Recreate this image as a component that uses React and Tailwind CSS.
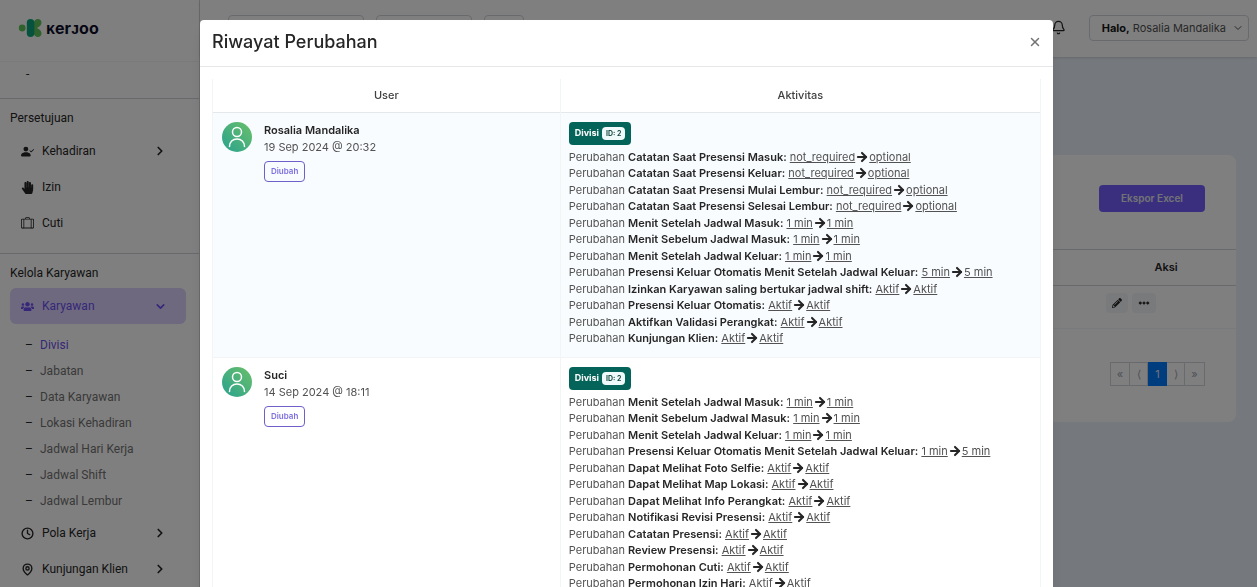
import { Bell, ChevronDown, ChevronRight, ArrowRight, X, Clock, MapPin } from "lucide-react";
import { BsFillPersonCheckFill, BsSuitcaseLg, BsThreeDots } from "react-icons/bs";
import { FaHandPaper, FaUsers, FaPencilAlt } from "react-icons/fa";

const navRowClass = "flex h-9 w-full items-center gap-2 pl-[11px] text-xs text-left";
const pageCellClass = "flex h-6 items-center justify-center border border-gray-300 text-[11px] text-gray-400";

const approvals = [
  { label: "Kehadiran", icon: BsFillPersonCheckFill, expandable: true },
  { label: "Izin", icon: FaHandPaper },
  { label: "Cuti", icon: BsSuitcaseLg },
];

const employeeLinks = ["Divisi", "Jabatan", "Data Karyawan", "Lokasi Kehadiran", "Jadwal Hari Kerja", "Jadwal Shift", "Jadwal Lembur"];

const history = [
  {
    user: "Rosalia Mandalika",
    date: "19 Sep 2024 @ 20:32",
    changes: [
      ["Catatan Saat Presensi Masuk", "not_required", "optional"],
      ["Catatan Saat Presensi Keluar", "not_required", "optional"],
      ["Catatan Saat Presensi Mulai Lembur", "not_required", "optional"],
      ["Catatan Saat Presensi Selesai Lembur", "not_required", "optional"],
      ["Menit Setelah Jadwal Masuk", "1 min", "1 min"],
      ["Menit Sebelum Jadwal Masuk", "1 min", "1 min"],
      ["Menit Setelah Jadwal Keluar", "1 min", "1 min"],
      ["Presensi Keluar Otomatis Menit Setelah Jadwal Keluar", "5 min", "5 min"],
      ["Izinkan Karyawan saling bertukar jadwal shift", "Aktif", "Aktif"],
      ["Presensi Keluar Otomatis", "Aktif", "Aktif"],
      ["Aktifkan Validasi Perangkat", "Aktif", "Aktif"],
      ["Kunjungan Klien", "Aktif", "Aktif"],
    ],
  },
  {
    user: "Suci",
    date: "14 Sep 2024 @ 18:11",
    changes: [
      ["Menit Setelah Jadwal Masuk", "1 min", "1 min"],
      ["Menit Sebelum Jadwal Masuk", "1 min", "1 min"],
      ["Menit Setelah Jadwal Keluar", "1 min", "1 min"],
      ["Presensi Keluar Otomatis Menit Setelah Jadwal Keluar", "1 min", "5 min"],
      ["Dapat Melihat Foto Selfie", "Aktif", "Aktif"],
      ["Dapat Melihat Map Lokasi", "Aktif", "Aktif"],
      ["Dapat Melihat Info Perangkat", "Aktif", "Aktif"],
      ["Notifikasi Revisi Presensi", "Aktif", "Aktif"],
      ["Catatan Presensi", "Aktif", "Aktif"],
      ["Review Presensi", "Aktif", "Aktif"],
      ["Permohonan Cuti", "Aktif", "Aktif"],
      ["Permohonan Izin Hari", "Aktif", "Aktif"],
    ],
  },
];

function Logo() {
  return (
    <a href="#" className="flex items-center gap-1 text-[#0d0d2b]">
      <svg width="24" height="20" viewBox="0 0 24 20" aria-hidden="true">
        <circle cx="4.200" cy="10" r="3.400" fill="#5fc45a" />
        <path d="M15 6c1-3.500 2.800-5 4.800-5C22 1 23.500 2.500 23.500 4.500c0 3-2.500 4.300-4.500 5.500 2 1.200 4.500 2.500 4.500 5.500 0 2-1.500 3.500-3.700 3.500-2 0-3.800-1.500-4.800-5z" fill="#5fc45a" />
        <rect x="8.800" y="1" width="7.500" height="18" rx="3.700" fill="#0aa67c" />
      </svg>
      <span className="text-base font-bold leading-5">ᴋerᴊoo</span>
    </a>
  );
}

function Sidebar() {
  return (
    <aside className="flex w-[200px] shrink-0 flex-col border-r border-gray-300 bg-white text-neutral-800">
      <div className="flex h-[62px] shrink-0 items-start border-b border-gray-100 pl-[18px] pt-[18px]">
        <Logo />
      </div>
      <div className="h-9 shrink-0 pl-[26px] font-['Roboto',sans-serif] text-xs leading-6">-</div>

      <nav className="border-t border-gray-300 pb-3 font-['Roboto',sans-serif]">
        <p className="flex h-[34px] items-center pl-[10px] pt-1 text-xs">Persetujuan</p>
        <div className="pl-[10px] pr-[32px]">
          {approvals.map(({ label, icon: Icon, expandable }) => (
            <button key={label} className={navRowClass}>
              <Icon size={13} />
              <span className="flex-1">{label}</span>
              {expandable && <ChevronRight size={14} strokeWidth={3} />}
            </button>
          ))}
        </div>
      </nav>

      <nav className="border-t border-gray-300 font-['Roboto',sans-serif]">
        <p className="flex h-[34px] items-center pl-[10px] pt-1 text-xs">Kelola Karyawan</p>
        <div className="pl-[10px] pr-[13px]">
          <button className={`${navRowClass} rounded-md bg-[#dcd3ff] pr-[19px] text-[#6c4ff0]`}>
            <FaUsers size={13} />
            <span className="flex-1">Karyawan</span>
            <ChevronDown size={13} strokeWidth={3} />
          </button>
        </div>
        <ul className="pb-px pt-2 text-xs">
          {employeeLinks.map((label, i) => (
            <li key={label} className="flex h-[26px] items-center gap-2 pl-[25px]">
              <span className="w-[7px]">–</span>
              <a href="#" className={i === 0 ? "text-[#6c4ff0]" : "text-neutral-500"}>{label}</a>
            </li>
          ))}
        </ul>
        <div className="pl-[10px] pr-[32px]">
          <button className={navRowClass}>
            <Clock size={13} strokeWidth={2.5} />
            <span className="flex-1">Pola Kerja</span>
            <ChevronRight size={14} strokeWidth={3} />
          </button>
          <button className={navRowClass}>
            <MapPin size={13} strokeWidth={2.5} />
            <span className="flex-1">Kunjungan Klien</span>
            <ChevronRight size={14} strokeWidth={3} />
          </button>
        </div>
      </nav>
    </aside>
  );
}

function Topbar() {
  return (
    <header className="flex h-[57px] shrink-0 items-start bg-white pl-7 pr-2 pt-[15px] shadow-sm">
      <div className="flex flex-1 gap-3">
        <div className="h-[26px] w-[136px] rounded-sm border border-gray-300" />
        <div className="h-[26px] w-[96px] rounded-sm border border-gray-300" />
        <div className="h-[26px] w-10 rounded-sm border border-gray-300" />
      </div>
      <button aria-label="Notifikasi" className="mr-[23px] mt-[5px] text-neutral-800">
        <Bell size={15} />
      </button>
      <button className="flex h-[26px] items-center gap-[6px] rounded-sm border border-gray-300 pl-3 pr-1 text-[11px] text-neutral-600">
        <span><b className="text-neutral-900">Halo,</b> Rosalia Mandalika</span>
        <ChevronDown size={12} />
      </button>
    </header>
  );
}

function DivisionCard() {
  return (
    <section className="rounded-lg bg-white pb-9">
      <div className="flex h-[94px] items-start justify-end pr-[31px] pt-[30px]">
        <button className="h-[27px] w-[106px] rounded-sm bg-[#745fff] text-[10px] font-semibold text-gray-200">Ekspor Excel</button>
      </div>
      <table className="w-full text-[11px] text-neutral-800">
        <thead>
          <tr className="h-9 border-y border-gray-300">
            <th></th>
            <th className="w-[140px] font-semibold">Aksi</th>
          </tr>
        </thead>
        <tbody>
          <tr className="h-[43px] border-b border-gray-100">
            <td></td>
            <td>
              <div className="flex gap-1 pl-[10px] pb-2">
                <button aria-label="Ubah" className="flex h-5 w-[22px] items-center justify-center rounded-sm bg-gray-100"><FaPencilAlt size={10} /></button>
                <button aria-label="Lainnya" className="flex h-5 w-6 items-center justify-center rounded-sm bg-gray-100"><BsThreeDots size={12} strokeWidth={1} /></button>
              </div>
            </td>
          </tr>
        </tbody>
      </table>
      <div className="flex justify-end pr-[31px] pt-[33px]">
        <button className={`${pageCellClass} w-5`}>«</button>
        <button className={`${pageCellClass} w-[18px] border-l-0`}>⟨</button>
        <button className="h-6 w-[19px] bg-[#007bff] text-[11px] text-gray-200">1</button>
        <button className={`${pageCellClass} w-[18px] border-l-0`}>⟩</button>
        <button className={`${pageCellClass} w-5 border-l-0`}>»</button>
      </div>
    </section>
  );
}

function Avatar() {
  return (
    <svg width="30" height="30" viewBox="0 0 30 30" className="shrink-0" aria-hidden="true">
      <defs>
        <linearGradient id="avatar" x1="0" y1="1" x2="1" y2="0">
          <stop offset="0.200" stopColor="#35a888" />
          <stop offset="1" stopColor="#6abf69" />
        </linearGradient>
      </defs>
      <circle cx="15" cy="15" r="15" fill="url(#avatar)" />
      <g fill="none" stroke="#fff" strokeWidth="1.500" strokeLinecap="round">
        <circle cx="15" cy="10" r="4.500" />
        <path d="M7.500 24.500c0-4.500 3.200-7.500 7.500-7.500s7.500 3 7.500 7.500" />
      </g>
    </svg>
  );
}

function HistoryRow({ user, date, changes }) {
  return (
    <tr className="border-b border-gray-100 align-top odd:bg-[#f9fcfe]">
      <td className="border-x border-gray-100 px-[9px] py-[9px]">
        <div className="flex gap-3">
          <Avatar />
          <div className="text-[11px] leading-[17px]">
            <p className="font-semibold text-neutral-800">{user}</p>
            <p>{date}</p>
            <span className="mt-[5px] inline-flex h-[21px] items-center rounded-sm border border-[#6f5fc9] px-[6px] text-[8px] font-semibold text-[#7d6ee0]">Diubah</span>
          </div>
        </div>
      </td>
      <td className="border-r border-gray-100 px-2 pb-[10px] pt-[9px]">
        <div className="mb-1 inline-flex h-[23px] items-center gap-[3px] rounded-sm bg-[#05645a] px-[6px] align-top text-[9px] font-bold text-white">
          Divisi
          <span className="rounded-sm bg-[#f0fafa] px-1 text-[7px] leading-[13px] text-[#1c4a45]">ID: 2</span>
        </div>
        <ul className="text-[11px] leading-normal">
          {changes.map(([field, from, to]) => (
            <li key={field}>
              Perubahan <b className="font-semibold text-neutral-800">{field}:</b> <u>{from}</u>
              <ArrowRight size={14} strokeWidth={3.5} className="inline align-[-3px] text-neutral-800" />
              <u>{to}</u>
            </li>
          ))}
        </ul>
      </td>
    </tr>
  );
}

function HistoryDialog() {
  return (
    <div className="fixed inset-0 overflow-hidden bg-black/50 pl-[200px] pr-[204px] pt-5">
      <div role="dialog" aria-labelledby="history-title" className="rounded-t-sm bg-white text-neutral-600 shadow-lg">
        <div className="flex h-[47px] items-center justify-between border-b border-gray-200 px-3 pb-[3px]">
          <h2 id="history-title" className="text-lg font-medium leading-6 text-neutral-800">Riwayat Perubahan</h2>
          <button aria-label="Tutup" className="-mr-px text-neutral-500"><X size={14} strokeWidth={2.5} /></button>
        </div>
        <div className="p-3">
          <table className="w-full table-fixed border-collapse">
            <thead>
              <tr className="h-[33px] border-b border-gray-200 text-[11px] text-neutral-700">
                <th className="w-[42%] border-x border-gray-100 font-medium">User</th>
                <th className="border-r border-gray-100 font-medium">Aktivitas</th>
              </tr>
            </thead>
            <tbody>
              {history.map((entry) => <HistoryRow key={entry.user} {...entry} />)}
            </tbody>
          </table>
        </div>
      </div>
    </div>
  );
}

function App() {
  return (
    <div className="flex h-screen overflow-hidden bg-[#eaf3fa] font-['Inter',sans-serif]">
      <Sidebar />
      <div className="flex min-w-0 flex-1 flex-col">
        <Topbar />
        <main className="pl-5 pr-[21px] pt-[98px]">
          <DivisionCard />
        </main>
      </div>
      <HistoryDialog />
    </div>
  );
}

export default App;
